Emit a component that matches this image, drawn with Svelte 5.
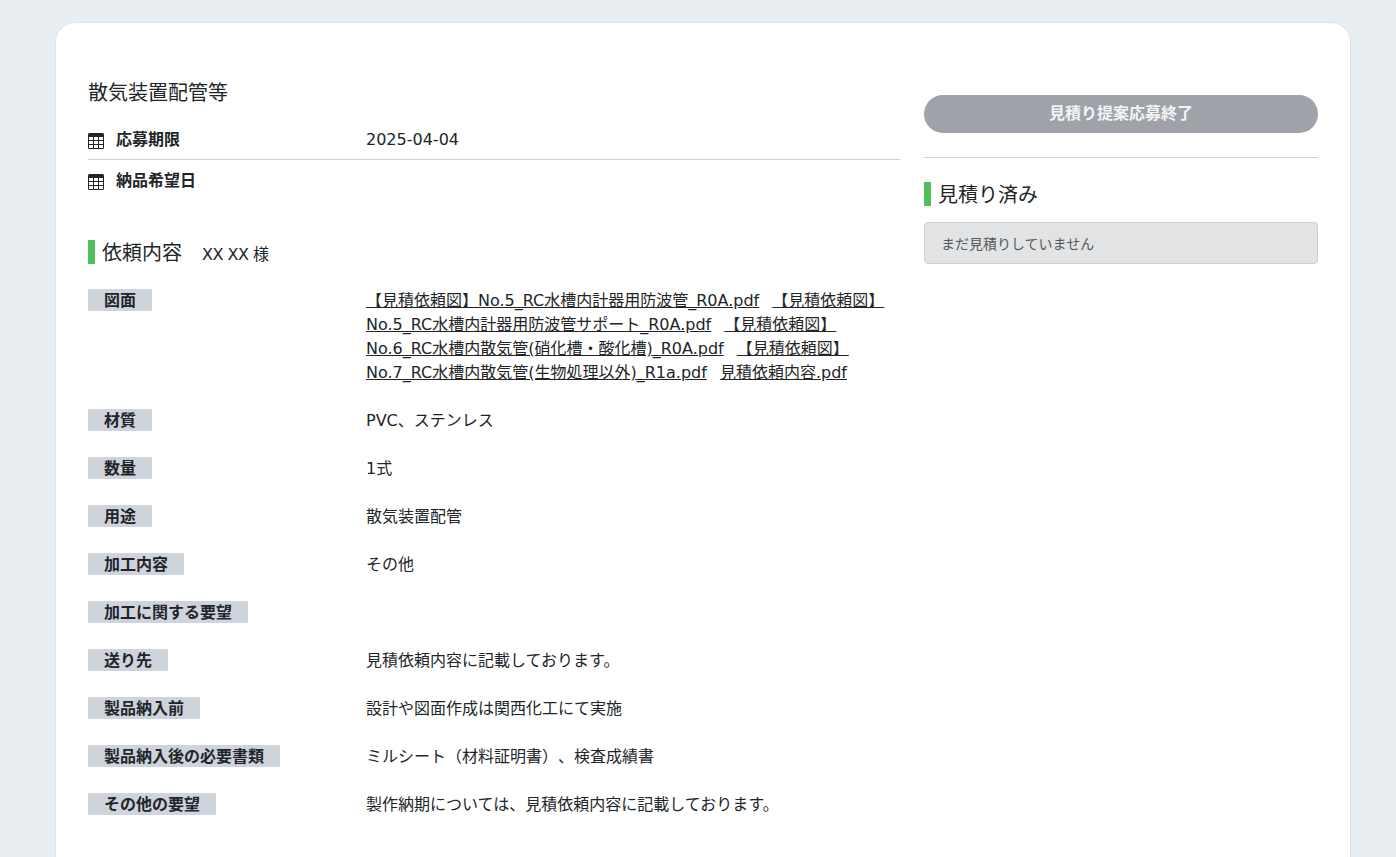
<script>
  const files = [
    '【見積依頼図】No.5_RC水槽内計器用防波管_R0A.pdf',
    '【見積依頼図】No.5_RC水槽内計器用防波管サポート_R0A.pdf',
    '【見積依頼図】No.6_RC水槽内散気管(硝化槽・酸化槽)_R0A.pdf',
    '【見積依頼図】No.7_RC水槽内散気管(生物処理以外)_R1a.pdf',
    '見積依頼内容.pdf'
  ];

  const details = [
    { label: '材質', value: 'PVC、ステンレス' },
    { label: '数量', value: '1式' },
    { label: '用途', value: '散気装置配管' },
    { label: '加工内容', value: 'その他' },
    { label: '加工に関する要望', value: '' },
    { label: '送り先', value: '見積依頼内容に記載しております。' },
    { label: '製品納入前', value: '設計や図面作成は関西化工にて実施' },
    { label: '製品納入後の必要書類', value: 'ミルシート（材料証明書）、検査成績書' },
    { label: 'その他の要望', value: '製作納期については、見積依頼内容に記載しております。' }
  ];
</script>

{#snippet calendar()}
  <svg class="calendar" viewBox="0 0 16 16" aria-hidden="true">
    <path d="M1.5 0h13A1.5 1.5 0 0 1 16 1.5v13a1.5 1.5 0 0 1-1.5 1.5h-13A1.5 1.5 0 0 1 0 14.5v-13A1.5 1.5 0 0 1 1.5 0z" fill="#212529" />
    <path d="M1 4h14v10.5a.5.5 0 0 1-.5.5h-13a.5.5 0 0 1-.5-.5z" fill="#fff" />
    <path d="M0 7.5h16M0 11.5h16M5.5 4v12M10.5 4v12" stroke="#212529" stroke-width="1" fill="none" />
  </svg>
{/snippet}

<div class="page">
  <main class="card">
    <section class="left">
      <h1>散気装置配管等</h1>
      <div class="date-row first">
        <div class="date-label">{@render calendar()}<strong>応募期限</strong></div>
        <div>2025-04-04</div>
      </div>
      <div class="date-row">
        <div class="date-label">{@render calendar()}<strong>納品希望日</strong></div>
        <div></div>
      </div>

      <div class="request-head">
        <h2>依頼内容</h2>
        <span class="client">XX XX 様</span>
      </div>

      <div class="detail">
        <div><span class="tag">図面</span></div>
        <div class="files">
          {#each files as file}
            <a href="#top">{file}</a>{' '}
          {/each}
        </div>
      </div>
      {#each details as row}
        <div class="detail">
          <div><span class="tag">{row.label}</span></div>
          <div>{row.value}</div>
        </div>
      {/each}
    </section>

    <aside class="right">
      <button class="closed" disabled>見積り提案応募終了</button>
      <hr />
      <h2>見積り済み</h2>
      <div class="notice">まだ見積りしていません</div>
    </aside>
  </main>
</div>

<style>
  :global(body) {
    margin: 0;
    background: #e9eef2;
    color: #212529;
    font-family: "DejaVu Sans", "Noto Sans CJK JP", sans-serif;
    font-size: 16px;
    line-height: 1.5;
    text-spacing-trim: space-all;
  }

  .page {
    height: 857px;
    overflow: hidden;
    padding: 22px 45px 0 55px;
    box-sizing: border-box;
  }

  .card {
    display: flex;
    gap: 24px;
    min-height: 900px;
    box-sizing: border-box;
    padding: 56px 32px 0;
    background: #fff;
    border: 1px solid #dee2e6;
    border-radius: 20px;
  }

  .left {
    width: 812px;
    flex: none;
  }

  .right {
    width: 394px;
    flex: none;
    padding-top: 16px;
  }

  h1 {
    margin: 0 0 16px;
    padding-top: 2px;
    height: 22px;
    font-size: 20px;
    font-weight: 400;
    line-height: 24px;
  }

  h2 {
    margin: 0;
    padding: 2px 0 0 7px;
    height: 22px;
    font-size: 20px;
    font-weight: 400;
    line-height: 22px;
    border-left: 7px solid #52c05a;
  }

  .date-row {
    display: flex;
    height: 40px;
    padding-top: 9px;
    box-sizing: border-box;
  }

  .date-row.first {
    height: 41px;
    border-bottom: 1px solid #ced1d4;
  }

  .date-label {
    display: flex;
    align-items: center;
    width: 278px;
    height: 24px;
  }

  .calendar {
    width: 16px;
    height: 16px;
    margin: 1px 12px 0 0;
  }

  .request-head {
    display: flex;
    align-items: baseline;
    margin: 40px 0 22px;
  }

  .client {
    margin-left: 20px;
    letter-spacing: -0.5px;
  }

  .detail {
    display: flex;
    min-height: 24px;
    margin-bottom: 24px;
  }

  .detail > div:first-child {
    width: 278px;
    flex: none;
  }

  .tag {
    display: block;
    width: fit-content;
    padding: 0 16px;
    height: 22px;
    line-height: 24px;
    font-weight: 700;
    background: #ced3dc;
  }

  .files a {
    color: inherit;
    margin-right: 8px;
  }

  .closed {
    display: block;
    width: 100%;
    height: 38px;
    padding: 0;
    border: 0;
    border-radius: 19px;
    background: #9fa3a9;
    color: #f4f4f5;
    font: 700 16px/1.5 "DejaVu Sans", "Noto Sans CJK JP", sans-serif;
  }

  hr {
    margin: 24px 0;
    border: 0;
    border-top: 1px solid #ced1d4;
  }

  .notice {
    margin-top: 16px;
    padding: 11px 16px 0;
    height: 42px;
    box-sizing: border-box;
    font-size: 14px;
    color: #55585c;
    background: #e2e3e5;
    border: 1px solid #cfd0d2;
    border-radius: 4px;
  }
</style>
